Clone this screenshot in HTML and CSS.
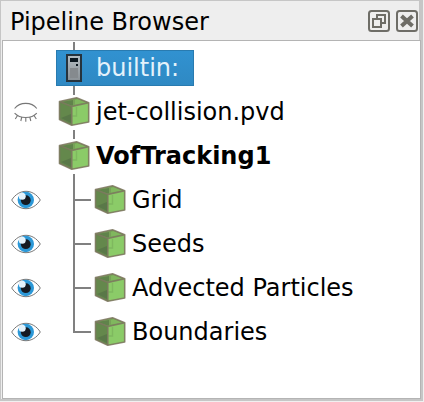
FILE: index.html
```
<!DOCTYPE html>
<html lang="en">
<head>
<meta charset="utf-8">
<title>Pipeline Browser</title>
<link rel="stylesheet" href="styles.css">
</head>
<body>
<svg class="defs" width="0" height="0">
  <symbol id="cube" viewBox="0 0 32 32">
    <path d="M1.500 5.500 18.500 1.800 30.700 6.500V26L13.800 29.200 1.500 23.500Z" fill="#77a258"/>
    <path d="M3 6 15 4V9.500H13.500Z" fill="#60834b"/>
    <path d="M17 4 20 3 28 6.500 17 8.500Z" fill="#80b75e"/>
    <path d="M1.500 5.500 13.800 10.500V29.200L1.500 23.500Z" fill="#64884c"/>
    <path d="M13.800 10.500 30.700 6.800V26L13.800 29.200Z" fill="#8bcb68"/>
    <path d="M3 22 13 18V27Z" fill="#597848"/>
    <path d="M18.500 11V20H14.500" fill="none" stroke="#7fb85f" stroke-width="1.400"/>
    <path d="M1.500 5.500 18.500 1.800 30.700 6.800V26L13.800 29.200 1.500 23.500ZM1.500 5.500 13.800 10.500 30.700 6.800M13.800 10.500V29.200" fill="none" stroke="#7d765f" stroke-opacity=".85" stroke-width="1.600" stroke-linejoin="round"/>
  </symbol>
  <symbol id="eye" viewBox="0 0 30 20">
    <path d="M.7 10C8-1.600 22-1.600 29.300 10 22 21.600 8 21.600 .7 10Z" fill="#fff" stroke="#777" stroke-width="1"/>
    <circle cx="14.800" cy="10" r="8.200" fill="#2c98d7"/>
    <circle cx="14.800" cy="10.200" r="4.900" fill="#151a22"/>
    <circle cx="11.200" cy="6.200" r="3.500" fill="#e4f2fb"/>
  </symbol>
  <symbol id="closed" viewBox="0 0 30 20">
    <path d="M3.600 6.500C9-.3 20.500-.3 25.800 6.500M3.600 11.200C9 17 20.500 17 25.800 11.200M6.500 13.500 4.300 17M10.800 15 9.800 19M14.800 15.600V19.800M18.800 15 19.800 19M23 13.500 25.300 17" fill="none" stroke="#777" stroke-width="1.100"/>
  </symbol>
</svg>
<div class="dock">
  <header class="title">
    <span class="caption">Pipeline Browser</span>
    <svg class="button" viewBox="0 0 22 22"><rect x="1" y="1" width="20" height="20" rx="2.500"/><path d="M5 9H13V17H5ZM9 8V5H17V13H14"/></svg>
    <svg class="button" viewBox="0 0 22 22"><rect x="1" y="1" width="20" height="20" rx="2.500"/><path class="cross" d="M5.500 6 16.500 16M16.500 6 5.500 16"/></svg>
  </header>
  <main class="tree">
    <div class="row">
      <span class="vis"></span>
      <span class="item selected">
        <svg class="icon" viewBox="0 0 32 32"><defs><linearGradient id="metal" x2="0" y2="1"><stop stop-color="#b3bcc2"/><stop offset="1" stop-color="#8b9297"/></linearGradient></defs><rect x="8" y="2" width="16" height="28" fill="#26333d"/><rect x="10" y="4" width="12" height="24" fill="url(#metal)"/><path d="M12 6H20V10H12ZM18 12H20V14H18Z" fill="#0c1820"/><rect x="12" y="16" width="8" height="10" fill="#858a8e"/></svg>
        <span class="label">builtin:</span>
      </span>
    </div>
    <div class="row">
      <svg class="vis"><use href="#closed"/></svg>
      <span class="item"><svg class="icon"><use href="#cube"/></svg><span class="label">jet-collision.pvd</span></span>
    </div>
    <div class="row">
      <span class="vis"></span>
      <span class="item"><svg class="icon"><use href="#cube"/></svg><span class="label strong">VofTracking1</span></span>
    </div>
    <div class="row child">
      <svg class="vis"><use href="#eye"/></svg>
      <span class="item"><svg class="icon"><use href="#cube"/></svg><span class="label">Grid</span></span>
    </div>
    <div class="row child">
      <svg class="vis"><use href="#eye"/></svg>
      <span class="item"><svg class="icon"><use href="#cube"/></svg><span class="label">Seeds</span></span>
    </div>
    <div class="row child">
      <svg class="vis"><use href="#eye"/></svg>
      <span class="item"><svg class="icon"><use href="#cube"/></svg><span class="label">Advected Particles</span></span>
    </div>
    <div class="row child last">
      <svg class="vis"><use href="#eye"/></svg>
      <span class="item"><svg class="icon"><use href="#cube"/></svg><span class="label">Boundaries</span></span>
    </div>
  </main>
</div>
</body>
</html>
```
FILE: styles.css
```
* { box-sizing: border-box; }
body {
  margin: 0;
  height: 402px;
  overflow: hidden;
  background: #f0f0f0;
  font: 24px/36px "DejaVu Sans", sans-serif;
  color: #000;
}
.defs { position: absolute; }
.dock {
  width: 423px;
  height: 401px;
  border: solid #c6c6c6;
  border-width: 1px 2px 2px 1px;
  background: #eee;
  display: flex;
  flex-direction: column;
}
.title {
  height: 39px;
  flex: none;
  display: flex;
  align-items: center;
  padding: 3px 0 0 9px;
  border-right: 2px solid #c6c6c6;
}
.caption { flex: 1; white-space: nowrap; }
.button {
  width: 22px;
  height: 22px;
  margin: 0 0 2px 6px;
  fill: none;
  stroke: #6e6d67;
  stroke-width: 2;
}
.button:last-child { margin-right: 1px; }
.button .cross { stroke-width: 4; }
.tree {
  flex: 1;
  margin-left: 1px;
  border: 1px solid #b4b4b4;
  background: #fff;
  padding: 5px 0 0 1px;
}
.row {
  position: relative;
  height: 44px;
  display: flex;
  align-items: center;
}
.vis {
  width: 30px;
  height: 20px;
  margin: 0 15px 0 7px;
  flex: none;
}
.item {
  position: relative;
  height: 36px;
  display: flex;
  align-items: center;
  padding: 0 15px 0 2px;
  white-space: nowrap;
}
.child .item { margin-left: 36px; }
.icon { width: 32px; height: 32px; margin-right: 6px; }
.strong { font-weight: bold; }
.selected {
  background: linear-gradient(#3192d1, #2f89c3);
  box-shadow: inset 0 0 0 1px #297bb0;
  color: #e4f2fb;
}
/* branch lines between the items */
.row::before {
  content: "";
  position: absolute;
  left: 69px;
  top: -4px;
  width: 2px;
  height: 44px;
  background: linear-gradient(#808080 9px, transparent 9px);
}
.child::before { background: #808080; }
.last::before { height: 27px; }
.child::after {
  content: "";
  position: absolute;
  left: 71px;
  top: 21px;
  width: 16px;
  height: 2px;
  background: #808080;
}
```
